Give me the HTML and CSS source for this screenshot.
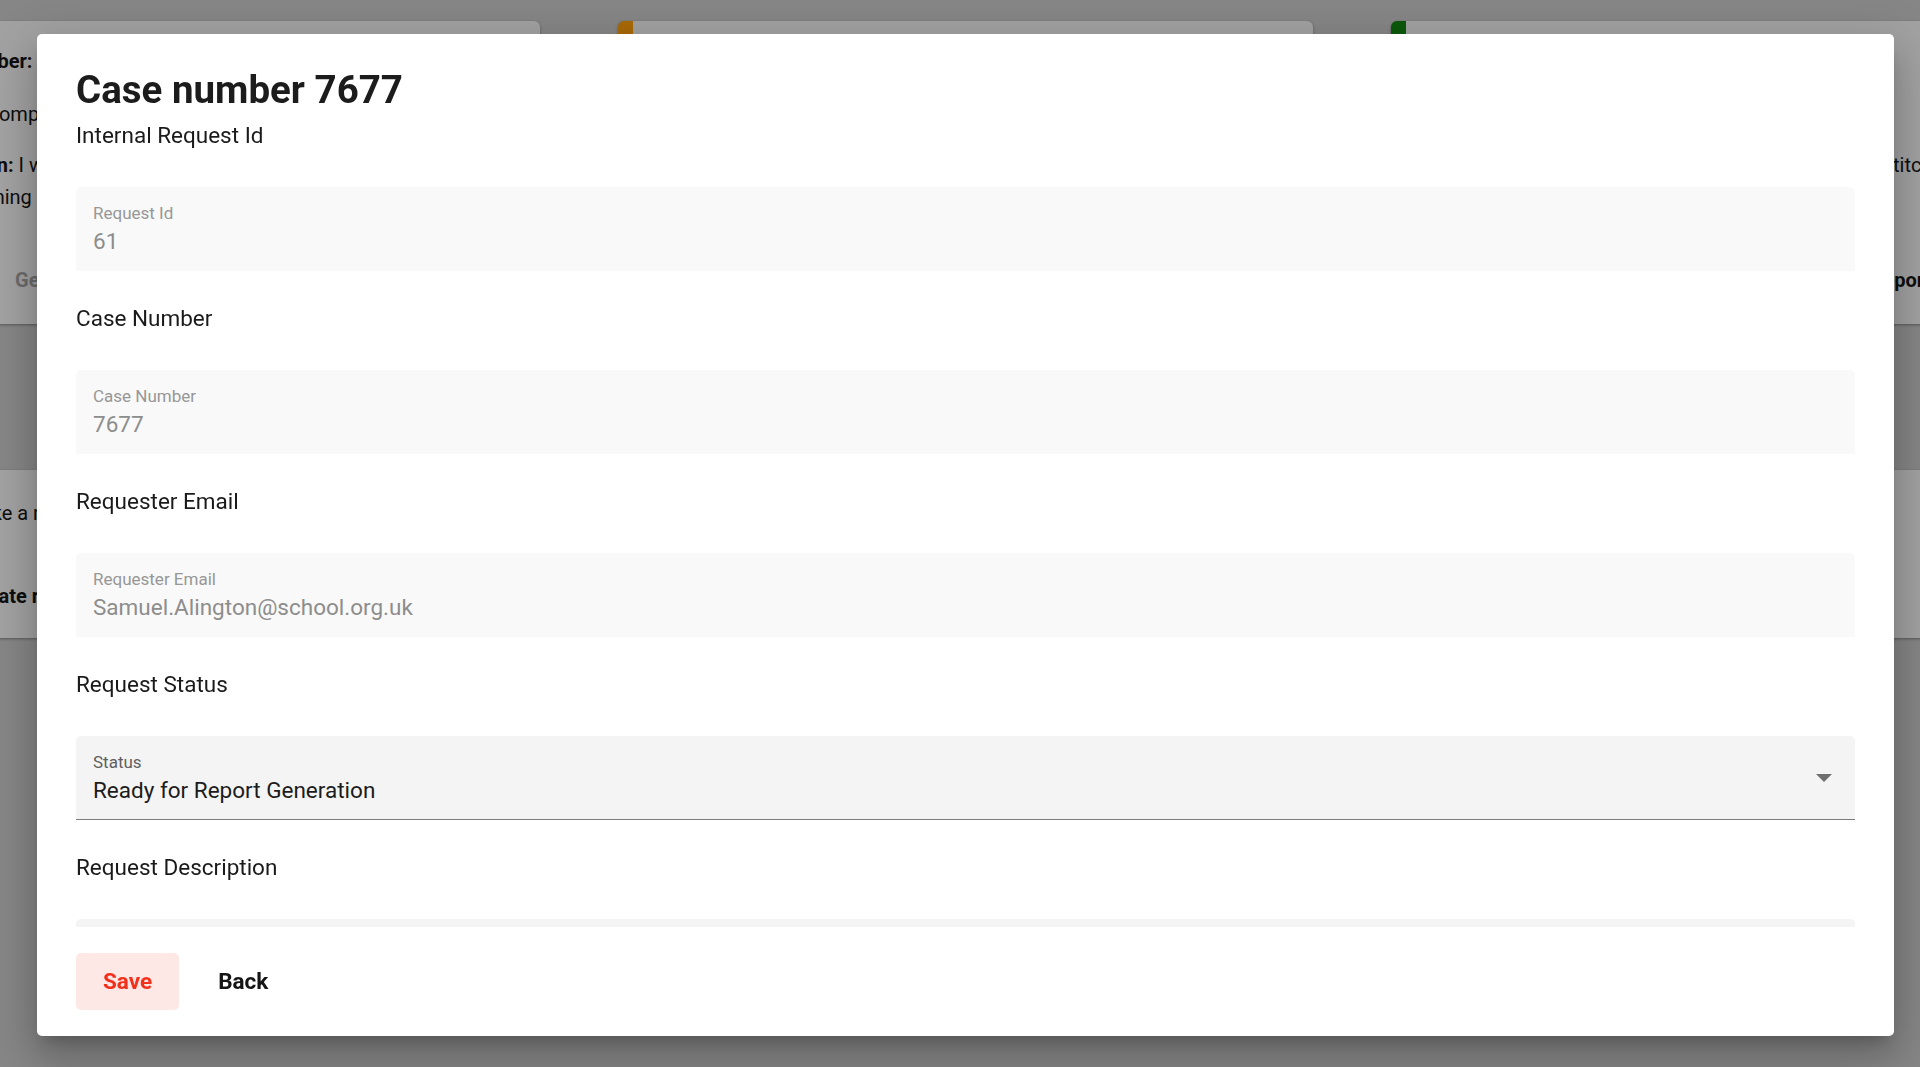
FILE: index.html
```html
<!DOCTYPE html>
<html lang="en">
<head>
<meta charset="utf-8">
<title>Case number 7677</title>
<link rel="stylesheet" href="styles.css">
</head>
<body>
<div class="page">
  <div class="row row-top">
    <div class="card card-a">
      <p class="line line-1"><b>Case Number:</b> 7677</p>
      <p class="line line-2">Status: Incomplete</p>
      <p class="line line-3"><b>Description:</b> I would like a report on my child's progress</p>
      <p class="line line-4">home learning and attendance this term.</p>
      <div class="card-actions"><span class="card-btn card-btn-disabled">Generate Report</span></div>
    </div>
    <div class="card card-b marker-orange"></div>
    <div class="card card-c marker-green">
      <p class="line line-1"><b>Case Number:</b> 7680</p>
      <p class="line line-2">Status: Ready for Report Generation</p>
      <p class="line line-3"><b>Description:</b> I would like a report on the school's Stitch club</p>
      <p class="line line-4">results for the spring term.</p>
      <div class="card-actions card-actions-c"><span class="card-btn">Generate Report</span></div>
    </div>
  </div>
  <div class="row row-bottom">
    <div class="card card-a card-short card-shift">
      <p class="line line-5">I would like a report on attendance</p>
      <p class="line line-6"><b>Case Update required</b></p>
    </div>
    <div class="card card-b card-short marker-orange"></div>
    <div class="card card-c card-short marker-green"></div>
  </div>
</div>

<div class="overlay">
  <div class="dialog" role="dialog">
    <h1 class="dialog-title">Case number 7677</h1>
    <div class="dialog-content">
      <section class="section">
        <h2 class="section-heading">Internal Request Id</h2>
        <div class="field field-disabled">
          <span class="field-label">Request Id</span>
          <span class="field-value">61</span>
        </div>
      </section>
      <section class="section">
        <h2 class="section-heading">Case Number</h2>
        <div class="field field-disabled">
          <span class="field-label">Case Number</span>
          <span class="field-value">7677</span>
        </div>
      </section>
      <section class="section">
        <h2 class="section-heading">Requester Email</h2>
        <div class="field field-disabled">
          <span class="field-label">Requester Email</span>
          <span class="field-value">Samuel.Alington@school.org.uk</span>
        </div>
      </section>
      <section class="section">
        <h2 class="section-heading">Request Status</h2>
        <div class="field field-select">
          <span class="field-label">Status</span>
          <span class="field-value">Ready for Report Generation</span>
          <svg class="select-arrow" width="16" height="8" viewBox="0 0 16 8" aria-hidden="true"><path d="M0 0 L16 0 L8 8 Z" fill="#6f6f6f"/></svg>
        </div>
      </section>
      <section class="section">
        <h2 class="section-heading">Request Description</h2>
        <div class="field field-select field-multiline">
          <span class="field-label">Description</span>
          <span class="field-value">I would like a report on my child's progress.</span>
        </div>
      </section>
    </div>
    <div class="dialog-actions">
      <button class="btn btn-save" type="button">Save</button>
      <button class="btn btn-back" type="button">Back</button>
    </div>
  </div>
</div>
</body>
</html>
```

FILE: styles.css
```css
* { box-sizing: border-box; }

html, body {
  margin: 0;
  padding: 0;
  width: 1920px;
  height: 1067px;
  overflow: hidden;
}

body {
  background: #868686;
  font-family: Roboto, "Noto Sans", "Liberation Sans", sans-serif;
  color: #111;
}

/* ---------- dimmed page behind the dialog ---------- */
.page {
  width: 1920px;
  height: 1067px;
  overflow: hidden;
}

.row {
  display: flex;
  gap: 78px;
  margin-left: -155px;
}

.row-top {
  padding-top: 21px;
}

.row-bottom {
  margin-top: 146px;
}

.card {
  flex: 0 0 auto;
  width: 695px;
  height: 303px;
  background: #a2a2a2;
  border-radius: 6px;
  box-shadow: 0 1px 3px rgba(0, 0, 0, 0.35);
  padding: 24px 0 0 60px;
  overflow: hidden;
  white-space: nowrap;
}

.card-short {
  height: 168px;
  padding-top: 27px;
}

.card-shift { padding-left: 68px; }

.marker-orange { border-left: 15px solid #a96a08; }
.marker-green { border-left: 15px solid #0b590b; }

.card-c { padding-left: 45px; }

.line {
  margin: 0;
  font-size: 20px;
  line-height: 32px;
  color: #0e0e0e;
}

.line b { font-weight: 700; }

.line-2 { margin-top: 21px; }
.line-3 { margin-top: 19px; }

.line-6 { margin-top: 51px; }

.card-actions {
  margin-top: 51px;
  padding-left: 110px;
  font-size: 20px;
  line-height: 32px;
  font-weight: 700;
}

.card-actions-c { padding-left: 333px; }

.card-btn { color: #0e0e0e; }
.card-btn-disabled { color: #6c6c6c; }

/* ---------- dialog ---------- */
.overlay {
  position: fixed;
  inset: 0;
  display: flex;
  padding: 34px 26px 31px 37px;
}

.dialog {
  flex: 1;
  display: flex;
  flex-direction: column;
  background: #fff;
  border-radius: 5px;
  box-shadow: 0 11px 15px -7px rgba(0, 0, 0, 0.2),
              0 24px 38px 3px rgba(0, 0, 0, 0.14),
              0 9px 46px 8px rgba(0, 0, 0, 0.12);
  overflow: hidden;
}

.dialog-title {
  margin: 0;
  padding: 32px 39px 0;
  font-size: 38.5px;
  line-height: 47px;
  font-weight: 700;
  color: #1c1c1c;
}

.dialog-content {
  flex: 1;
  min-height: 0;
  overflow: hidden;
  padding: 7px 39px 0;
}

.section {
  margin-bottom: 32px;
}

.section-heading {
  margin: 0 0 37px;
  font-size: 22.5px;
  line-height: 30px;
  font-weight: 400;
  color: #1a1a1a;
}

.field {
  position: relative;
  height: 84px;
  padding: 16px 17px 0;
  border-radius: 5px 5px 0 0;
  display: flex;
  flex-direction: column;
}

.field-label {
  font-size: 17px;
  line-height: 20px;
}

.field-value {
  margin-top: 4px;
  font-size: 22.5px;
  line-height: 28px;
}

.field-disabled {
  background: #f9f9f9;
}

.field-disabled .field-label { color: #979797; }
.field-disabled .field-value { color: #8d8d8d; }

.field-select {
  background: #f4f4f4;
  border-bottom: 1px solid #7c7c7c;
}

.field-select .field-label { color: #5f5f5f; }
.field-select .field-value { color: #1c1c1c; }

.select-arrow {
  position: absolute;
  right: 23px;
  top: 38px;
}

.dialog-actions {
  display: flex;
  align-items: center;
  gap: 12px;
  padding: 26px 39px;
}

.btn {
  height: 57px;
  padding: 0 27px;
  border: 0;
  border-radius: 5px;
  background: transparent;
  font-family: Roboto, "Noto Sans", "Liberation Sans", sans-serif;
  font-size: 22.5px;
  font-weight: 700;
  line-height: 57px;
  cursor: pointer;
}

.btn-save {
  background: #fde8e6;
  color: #f2301b;
}

.btn-back {
  color: #151515;
}
```
